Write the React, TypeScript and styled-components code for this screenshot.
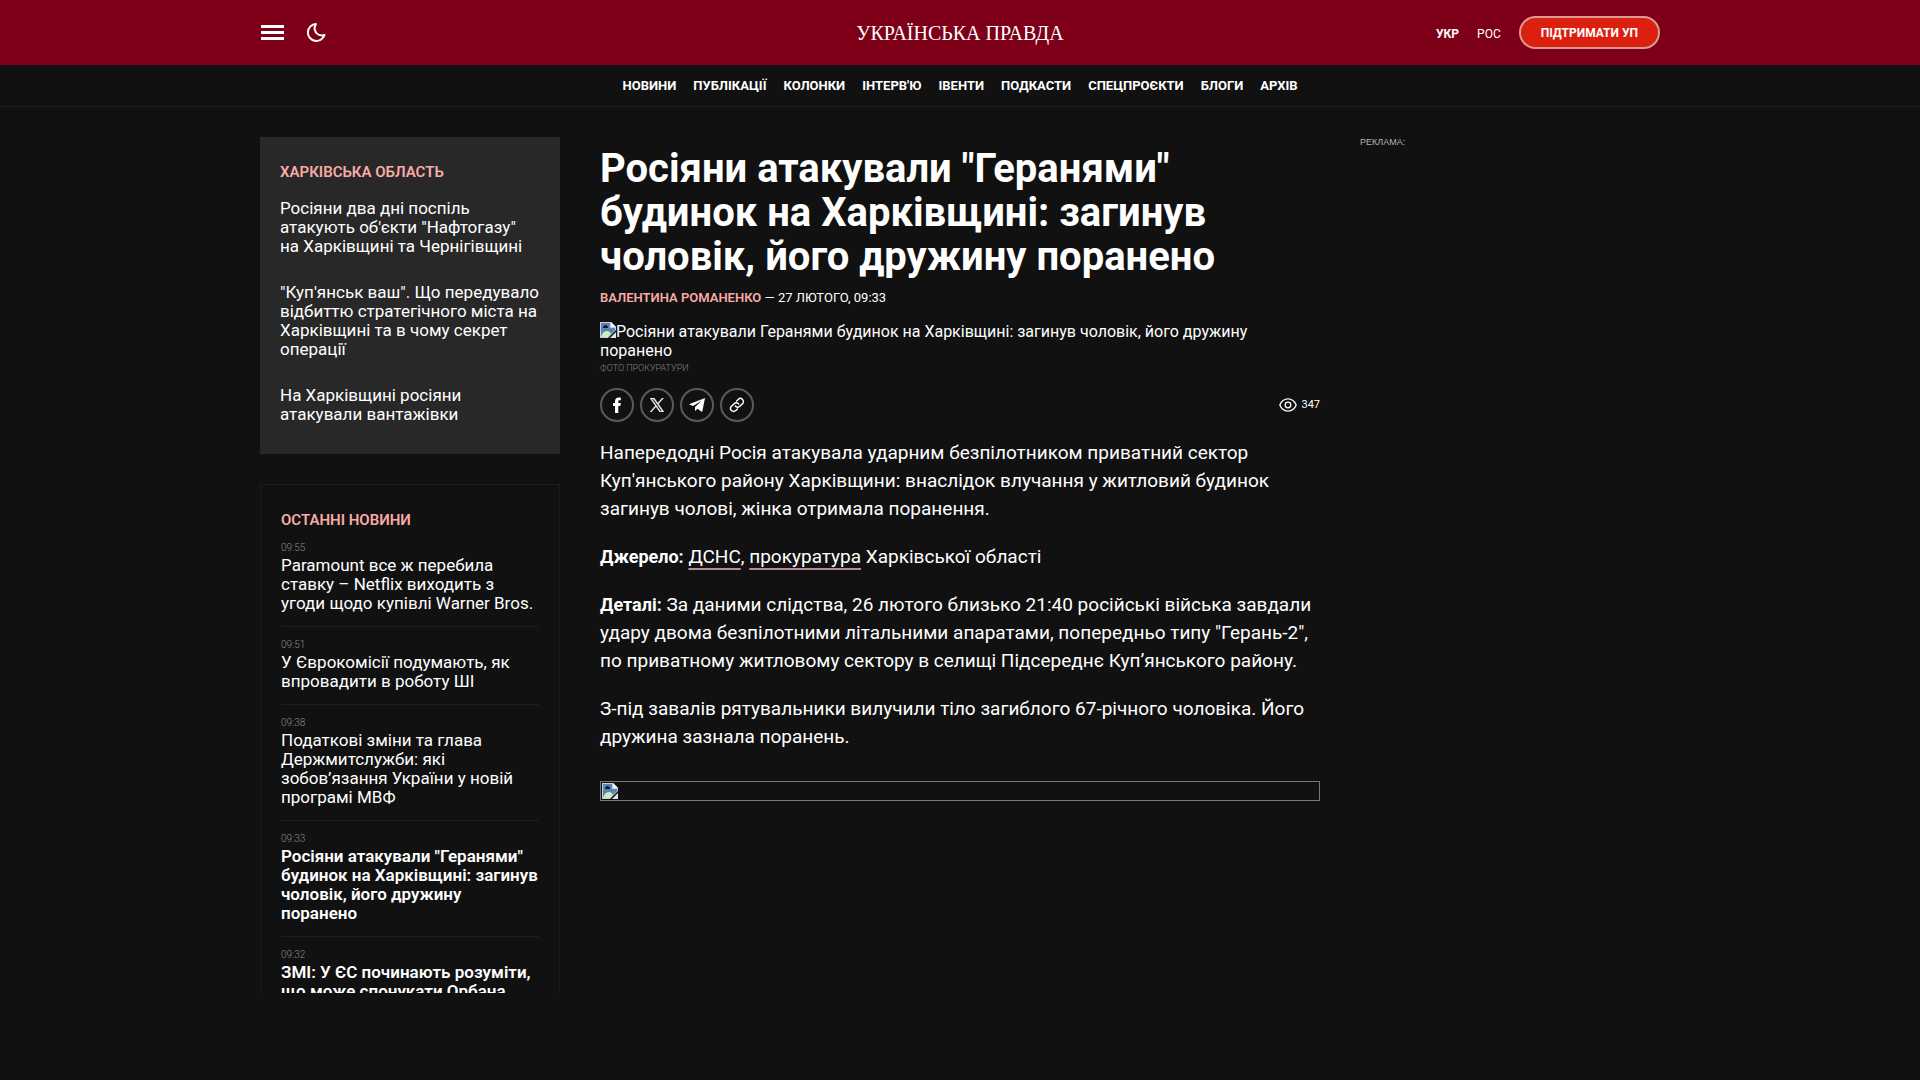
import React from "react";
import styled, { createGlobalStyle } from "styled-components";

const GlobalStyle = createGlobalStyle`
  *, *::before, *::after { box-sizing: border-box; }
  body {
    margin: 0;
    background: #111111;
    color: #ffffff;
    font-family: Roboto, "Noto Sans", sans-serif;
    font-size: 16px;
  }
  a { color: inherit; text-decoration: none; }
  button { font: inherit; color: inherit; background: none; border: 0; padding: 0; cursor: pointer; }
`;

const Container = styled.div`
  width: 100%;
  max-width: 1400px;
  margin: 0 auto;
`;

const Header = styled.header`
  background: #7d0018;
`;

const HeaderRow = styled(Container)`
  display: grid;
  grid-template-columns: 1fr auto 1fr;
  align-items: center;
  height: 65px;
`;

const HeaderTools = styled.div`
  display: flex;
  align-items: center;
  gap: 20px;
`;

const IconButton = styled.button`
  display: flex;
  align-items: center;
  justify-content: center;
  width: 24px;
  height: 24px;
`;

const Logo = styled.a`
  font-family: "Liberation Serif", "Times New Roman", serif;
  font-size: 20px;
  line-height: 24px;
`;

const HeaderActions = styled.div`
  display: flex;
  align-items: center;
  justify-content: flex-end;
  gap: 18px;
`;

const LangLink = styled.a<{ $active?: boolean }>`
  font-size: 12px;
  line-height: 16px;
  font-weight: ${(p) => (p.$active ? 700 : 400)};
`;

const Languages = styled.div`
  display: flex;
  gap: 18px;
  padding-top: 2px;
`;

const SupportLink = styled.a`
  display: flex;
  align-items: center;
  height: 33px;
  padding: 0 20px;
  border: 2px solid #dc9a94;
  border-radius: 17px;
  background: #dc2010;
  font-size: 12px;
  font-weight: 700;
  line-height: 16px;
`;

const Nav = styled.nav`
  display: flex;
  justify-content: center;
  gap: 17px;
  padding: 11px 0 10px;
  border-bottom: 1px solid #1e1e1e;
`;

const NavLink = styled.a`
  font-size: 13px;
  font-weight: 700;
  line-height: 20px;
`;

const Columns = styled(Container)`
  display: grid;
  grid-template-columns: 300px minmax(0, 1fr) 300px;
  gap: 40px;
  align-items: start;
  padding-top: 30px;
`;

const Sidebar = styled.aside`
  display: grid;
  gap: 30px;
`;

const TopicCard = styled.section`
  padding: 25px 20px 30px;
  background: #282828;
`;

const LatestCard = styled.section`
  max-height: 509px;
  overflow: hidden;
  padding: 25px 20px;
  border: 1px solid #1c1c1c;
  border-bottom: 0;
`;

const CardTitle = styled.h2`
  margin: 0;
  color: #f9aba6;
  font-size: 15px;
  font-weight: 600;
  line-height: 20px;
`;

const TopicList = styled.div`
  display: grid;
  gap: 27px;
  padding-top: 17px;
`;

const NewsLink = styled.a<{ $bold?: boolean }>`
  display: block;
  font-size: 17px;
  font-weight: ${(p) => (p.$bold ? 600 : 400)};
  line-height: 19px;
`;

const NewsItem = styled.article`
  padding: 10px 0 13px;
  border-bottom: 1px solid #1e1e1e;
`;

const NewsTime = styled.time`
  display: block;
  color: #8c8c8c;
  font-size: 10px;
  font-weight: 300;
  line-height: 16px;
`;

const Article = styled.main`
  padding-top: 10px;
`;

const Headline = styled.h1`
  margin: 0;
  font-size: 40px;
  font-weight: 700;
  line-height: 44px;
`;

const Byline = styled.div`
  margin-top: 10px;
  font-size: 13px;
  line-height: 18px;
`;

const Author = styled.a`
  color: #f9aba6;
  font-weight: 600;
`;

const Figure = styled.figure`
  margin: 15px 0 0;
`;

const AltText = styled.div`
  font-size: 16px;
  line-height: 19px;
`;

const Caption = styled.figcaption`
  color: #808080;
  font-size: 9px;
  font-weight: 300;
  line-height: 16px;
`;

const ShareRow = styled.div`
  display: flex;
  align-items: center;
  justify-content: space-between;
  margin: 12px 0 17px;
`;

const ShareButtons = styled.div`
  display: flex;
  gap: 6px;
`;

const ShareButton = styled.button`
  display: flex;
  align-items: center;
  justify-content: center;
  width: 34px;
  height: 34px;
  border: 2px solid #5a5a5a;
  border-radius: 50%;
`;

const Views = styled.div`
  display: flex;
  align-items: center;
  gap: 4px;
  font-size: 11px;
  line-height: 16px;
`;

const Paragraph = styled.p`
  margin: 0 0 20px;
  font-size: 19px;
  line-height: 28px;
`;

const Lead = styled.strong`
  font-size: 18px;
  font-weight: 700;
`;

const SourceLink = styled.a`
  text-decoration: underline 2px #b98a94;
  text-underline-offset: 5px;
  text-decoration-skip-ink: none;
`;

const EmptyPicture = styled.div`
  display: flex;
  margin-top: 30px;
  height: 20px;
  padding: 1px;
  border: 1px solid #777777;
`;

const AdLabel = styled.div`
  color: #b4b4b4;
  font-family: "Liberation Sans", Arial, sans-serif;
  font-size: 9px;
  line-height: 11px;
`;

const InlineIcon = styled.svg`
  vertical-align: -1px;
`;

const BrokenPicture = () => (
  <InlineIcon width="16" height="16" viewBox="0 0 16 16" aria-hidden="true">
    <path d="M0 0h11l5 5v3l-8 8H0z" fill="#c8cfd6" />
    <path d="M1 1h9v5h5v2l-7 7H1z" fill="#5c83b5" />
    <path d="M1 15c1-4 3-6 6-6 2 0 3 1 4 3l-3 3z" fill="#c8f0b8" />
    <path d="M3 6c0-2 1-2 2-3 2 0 3 1 3 3z" fill="#111a2c" />
    <path d="M11 0l5 5h-5z" fill="#f4f6f8" />
    <path d="M16 10v6h-6z" fill="#dfe6ec" />
  </InlineIcon>
);

const sections = ["Новини", "Публікації", "Колонки", "Інтерв'ю", "Івенти", "Подкасти", "Спецпроєкти", "Блоги", "Архів"];

const topicNews = [
  "Росіяни два дні поспіль атакують об'єкти \"Нафтогазу\" на\u00a0Харківщині та Чернігівщині",
  "\"Куп'янськ ваш\". Що передувало відбиттю стратегічного міста на Харківщині та в чому секрет операції",
  "На Харківщині росіяни атакували вантажівки",
];

const latestNews = [
  { time: "09:55", title: "Paramount все ж перебила ставку – Netflix виходить з угоди щодо купівлі Warner Bros." },
  { time: "09:51", title: "У Єврокомісії подумають, як впровадити в роботу ШІ" },
  { time: "09:38", title: "Податкові зміни та глава Держмитслужби: які зобов’язання України у новій програмі МВФ" },
  { time: "09:33", title: "Росіяни атакували \"Геранями\" будинок на Харківщині: загинув чоловік, його дружину поранено", bold: true },
  { time: "09:32", title: "ЗМІ: У ЄС починають розуміти, що може спонукати Орбана", bold: true },
];

export default function App() {
  return (
    <>
      <GlobalStyle />
      <Header>
        <HeaderRow>
          <HeaderTools>
            <IconButton aria-label="Меню">
              <svg width="24" height="24" viewBox="0 0 24 24" fill="#fff">
                <path d="M1 4h23v3H1zM1 10h23v3H1zM1 16h23v3H1z" />
              </svg>
            </IconButton>
            <IconButton aria-label="Темна тема">
              <svg width="24" height="24" viewBox="0 0 24 24" fill="none" stroke="#fff" strokeWidth="2" strokeLinejoin="round">
                <path d="M12 3a8.500 8.500 0 1 0 8.500 11c-4.500 1.500-9-1-9.800-5.500C10.400 6.500 11 4.500 12 3z" />
              </svg>
            </IconButton>
          </HeaderTools>
          <Logo href="#">УКРАЇНСЬКА ПРАВДА</Logo>
          <HeaderActions>
            <Languages>
              <LangLink href="#" $active>УКР</LangLink>
              <LangLink href="#">РОС</LangLink>
            </Languages>
            <SupportLink href="#">ПІДТРИМАТИ УП</SupportLink>
          </HeaderActions>
        </HeaderRow>
      </Header>
      <Nav>
        {sections.map((name) => (
          <NavLink key={name} href="#">{name.toUpperCase()}</NavLink>
        ))}
      </Nav>
      <Columns>
        <Sidebar>
          <TopicCard>
            <CardTitle>ХАРКІВСЬКА ОБЛАСТЬ</CardTitle>
            <TopicList>
              {topicNews.map((title) => (
                <NewsLink key={title} href="#">{title}</NewsLink>
              ))}
            </TopicList>
          </TopicCard>
          <LatestCard>
            <CardTitle>ОСТАННІ НОВИНИ</CardTitle>
            {latestNews.map((item) => (
              <NewsItem key={item.time}>
                <NewsTime>{item.time}</NewsTime>
                <NewsLink href="#" $bold={item.bold}>{item.title}</NewsLink>
              </NewsItem>
            ))}
          </LatestCard>
        </Sidebar>
        <Article>
          <Headline>Росіяни атакували "Геранями" будинок на Харківщині: загинув чоловік, його дружину поранено</Headline>
          <Byline>
            <Author href="#">ВАЛЕНТИНА РОМАНЕНКО</Author> — 27 ЛЮТОГО, 09:33
          </Byline>
          <Figure>
            <AltText>
              <BrokenPicture />
              Росіяни атакували Геранями будинок на Харківщині: загинув чоловік, його дружину поранено
            </AltText>
            <Caption>ФОТО ПРОКУРАТУРИ</Caption>
          </Figure>
          <ShareRow>
            <ShareButtons>
              <ShareButton aria-label="Facebook">
                <svg width="16" height="16" viewBox="0 0 16 16" fill="#fff">
                  <path d="M6 16V9H4V6h2V4.300C6 1.800 7.400.5 9.800.5c.9 0 1.700.1 2 .1v2.700h-1.200c-1.100 0-1.300.5-1.300 1.200V6h2.500l-.4 3H9.300v7z" />
                </svg>
              </ShareButton>
              <ShareButton aria-label="X">
                <svg width="14" height="14" viewBox="0 0 24 24" fill="#fff" stroke="#fff" strokeWidth="0.8">
                  <path d="M14.260 10.160 23.180 0h-2.110l-7.750 8.820L7.140 0H0l9.360 13.340L0 24h2.110l8.180-9.320L16.830 24h7.140zM11.370 13.460l-.95-1.330L2.880 1.560h3.250l6.090 8.530.95 1.330 7.910 11.090h-3.250z" />
                </svg>
              </ShareButton>
              <ShareButton aria-label="Telegram">
                <svg width="18" height="16" viewBox="0 0 18 16" fill="#fff">
                  <path d="M17 1 1 7.300l4 1.700L14 3.500 7 10v4l2.500-2.300 3.700 2.800c.6.300 1 .1 1.200-.6z" />
                </svg>
              </ShareButton>
              <ShareButton aria-label="Копіювати посилання">
                <svg width="16" height="16" viewBox="0 0 24 24" fill="none" stroke="#fff" strokeWidth="2.200" strokeLinecap="round" strokeLinejoin="round">
                  <path d="M9.500 13.500a4.500 4.500 0 0 0 6.800.5l4-4a4.500 4.500 0 0 0-6.400-6.400l-2.500 2.500" />
                  <path d="M14.500 10.500a4.500 4.500 0 0 0-6.800-.5l-4 4a4.500 4.500 0 0 0 6.400 6.400l2.500-2.500" />
                </svg>
              </ShareButton>
            </ShareButtons>
            <Views>
              <svg width="18" height="14" viewBox="0 0 18 14" fill="none" stroke="#fff" strokeWidth="1.300">
                <path d="M.8 7C2.500 2.800 5.500.9 9 .9s6.500 1.900 8.200 6.100c-1.700 4.200-4.700 6.100-8.200 6.100S2.500 11.200.8 7z" />
                <circle cx="9" cy="7" r="2.800" />
              </svg>
              347
            </Views>
          </ShareRow>
          <Paragraph>
            Напередодні Росія атакувала ударним безпілотником приватний сектор Куп'янського району Харківщини: внаслідок влучання у житловий будинок загинув чолові, жінка отримала поранення.
          </Paragraph>
          <Paragraph>
            <Lead>Джерело:</Lead> <SourceLink href="#">ДСНС</SourceLink>, <SourceLink href="#">прокуратура</SourceLink> Харківської області
          </Paragraph>
          <Paragraph>
            <Lead>Деталі:</Lead> За даними слідства, 26 лютого близько 21:40 російські війська завдали удару двома безпілотними літальними апаратами, попередньо типу "Герань-2", по приватному житловому сектору в селищі Підсереднє Куп’янського району.
          </Paragraph>
          <Paragraph>
            З-під завалів рятувальники вилучили тіло загиблого 67-річного чоловіка. Його дружина зазнала поранень.
          </Paragraph>
          <EmptyPicture>
            <BrokenPicture />
          </EmptyPicture>
        </Article>
        <AdLabel>РЕКЛАМА:</AdLabel>
      </Columns>
    </>
  );
}
